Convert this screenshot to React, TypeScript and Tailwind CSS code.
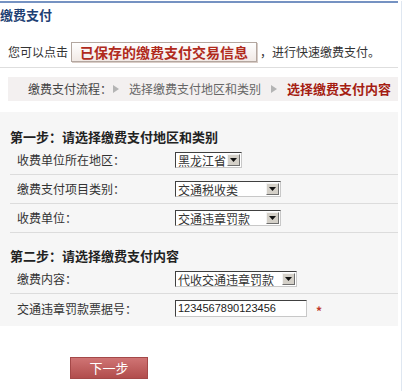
const FONT = { fontFamily: '"Noto Sans CJK SC", "Liberation Sans", sans-serif' };

function Arrow() {
  return (
    <svg width="6" height="8" viewBox="0 0 6 8" className="inline-block">
      <path d="M0 0 L6 4 L0 8 Z" fill="#b4b4b4" />
    </svg>
  );
}

function Select({ value, width }: { value: string; width: string }) {
  return (
    <div
      className={`flex h-[16px] items-center justify-between border border-t-[#404040] border-l-[#404040] border-r-[#c8c8c8] border-b-[#c8c8c8] bg-white pl-[2px] pr-[1px] ${width}`}
    >
      <span className="text-[12px] leading-[13px] text-[#333]">{value}</span>
      <span className="flex h-[12px] w-[13px] items-center justify-center border border-t-[#f4f4f4] border-l-[#f4f4f4] border-r-[#6e6e6e] border-b-[#6e6e6e] bg-[#d4d0c8]">
        <svg width="7" height="4" viewBox="0 0 7 4">
          <path d="M0 0 L7 0 L3.5 4 Z" fill="#111" />
        </svg>
      </span>
    </div>
  );
}

function Row({ label, children, last }: { label: string; children: React.ReactNode; last?: boolean }) {
  return (
    <div className={`ml-[10px] flex items-center pl-[7px] ${last ? 'h-[29px]' : 'h-[29px] border-b border-[#dcdcdc]'}`}>
      <span className="w-[158px] text-[12px] text-[#333]">{label}</span>
      {children}
    </div>
  );
}

export default function App() {
  return (
    <div className="h-[391px] w-[405px] bg-white pt-[1px]" style={FONT}>
      <div className="h-[390px] w-[402px] border-r border-[#dfe7f1] pr-[3px]">
        <div className="border-t-2 border-[#7592c2]">
          {/* title */}
          <div className="pt-[4px] text-[13px] font-bold leading-[16px] text-[#1e3f73]">缴费支付</div>

          {/* saved info */}
          <div className="mt-[19px] flex items-center border-b border-[#dedede] pb-[5px] pl-[8px] text-[12px] text-[#333]">
            <span>您可以点击</span>
            <span className="ml-[3px] flex h-[20px] items-center border border-[#b3a7a0] bg-gradient-to-b from-white to-[#f1e9e5] px-[8px] text-[14px] font-bold text-[#b02a1c] shadow-[1px_1px_0_#d8ccc6]">
              已保存的缴费支付交易信息
            </span>
            <span className="ml-[3px]">，进行快速缴费支付。</span>
          </div>

          {/* flow */}
          <div className="ml-[8px] mt-[9px] flex h-[24px] items-center bg-[#f3f0f0] pl-[20px] text-[12px]">
            <span className="text-[#444]">缴费支付流程：</span>
            <span className="ml-[1px] mr-[10px] flex items-center"><Arrow /></span>
            <span className="text-[#666]">选择缴费支付地区和类别</span>
            <span className="mx-[10px] flex items-center"><Arrow /></span>
            <span className="text-[13px] font-bold text-[#a51d12]">选择缴费支付内容</span>
          </div>

          {/* form panel */}
          <div className="mt-[11px] h-[214px] bg-[#f6f6f6]">
            <div className="pl-[10px] pt-[16px] text-[13px] font-bold leading-[18px] text-[#222]">
              第一步：请选择缴费支付地区和类别
            </div>
            <Row label="收费单位所在地区：">
              <Select value="黑龙江省" width="w-[67px]" />
            </Row>
            <Row label="缴费支付项目类别：">
              <Select value="交通税收类" width="w-[106px]" />
            </Row>
            <Row label="收费单位：">
              <Select value="交通违章罚款" width="w-[106px]" />
            </Row>

            <div className="pl-[10px] pt-[14px] text-[13px] font-bold leading-[18px] text-[#222]">
              第二步：请选择缴费支付内容
            </div>
            <Row label="缴费内容：">
              <Select value="代收交通违章罚款" width="w-[122px]" />
            </Row>
            <Row label="交通违章罚款票据号：" last>
              <div className="flex h-[17px] w-[132px] items-center border border-t-[#404040] border-l-[#404040] border-r-[#c8c8c8] border-b-[#c8c8c8] bg-white pl-[2px] text-[11px] text-[#222]" style={{ fontFamily: '"Liberation Sans", sans-serif' }}>
                1234567890123456
              </div>
              <span className="ml-[9px] mt-[5px] text-[12px] font-bold text-[#c0392b]">*</span>
            </Row>
          </div>

          {/* next */}
          <div className="ml-[70px] mt-[31px] flex h-[22px] w-[78px] items-center justify-center border border-[#a44848] bg-gradient-to-b from-[#cf7474] to-[#b14d4d] text-[13px] text-white">
            下一步
          </div>
        </div>
      </div>
    </div>
  );
}
